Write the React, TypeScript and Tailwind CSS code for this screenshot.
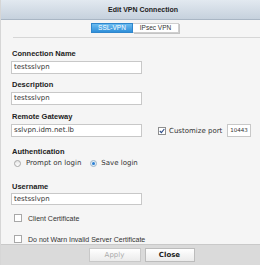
export default function App() {
  const label = "h-[9px] text-[7.5px] leading-[9px] font-bold text-[#222] pl-px";
  const input =
    "bg-white border border-[#c8c8c8] px-[2px] text-[7px] text-[#333] font-['DejaVu_Sans',sans-serif] whitespace-nowrap";
  const small = "text-[7px] leading-[10px] text-[#333] font-['DejaVu_Sans',sans-serif] whitespace-nowrap";
  return (
    <div className="w-[260px] h-[265px] flex flex-col bg-[#f5f5f5] border-l border-[#d6d6d6] font-['Liberation_Sans',Arial,sans-serif] overflow-hidden">
      {/* Header */}
      <div className="h-[20px] shrink-0 flex items-center justify-center pl-[25px] bg-gradient-to-b from-[#e2e9f0] to-[#c6d1dd] border-b border-[#a9b6c4]">
        <span className="text-[7px] leading-none font-bold text-[#222] whitespace-nowrap">Edit VPN Connection</span>
      </div>

      {/* Tabs */}
      <div className="flex mt-[3px] ml-[90px]">
        <div className="h-[10px] w-[42px] flex items-center justify-center bg-gradient-to-b from-[#6bbcf0] to-[#2e8fd9] border border-[#2f86cc] text-[6.5px] leading-none text-white">
          SSL-VPN
        </div>
        <div className="h-[10px] w-[46px] flex items-center justify-center bg-white border border-l-0 border-[#cfcfcf] shadow-[1px_1px_0_#c4c4c4] text-[6.5px] leading-none text-[#333]">
          IPsec VPN
        </div>
      </div>
      <div className="ml-[12px] mt-[4px] h-px shrink-0 bg-[#d6d6d6]" />

      {/* Form */}
      <div className="flex flex-col pl-[10px]">
        <div className={label + " mt-[11px]"}>Connection Name</div>
        <div className={input + " mt-[3px] w-[131px] h-[13px] leading-[11px]"}>testsslvpn</div>

        <div className={label + " mt-[6px]"}>Description</div>
        <div className={input + " mt-[3px] w-[131px] h-[13px] leading-[11px]"}>testsslvpn</div>

        <div className={label + " mt-[7px]"}>Remote Gateway</div>
        <div className="flex items-center mt-[3px] h-[13px]">
          <div className={input + " w-[131px] h-[13px] leading-[11px] text-[6.5px]"}>sslvpn.idm.net.lb</div>
          <div className="ml-[16px] w-[8px] h-[8px] bg-white border border-[#8e8e8e] flex items-center justify-center">
            <svg width="6" height="6" viewBox="0 0 6 6">
              <path d="M0.8 3 L2.4 4.6 L5.3 1" stroke="#2b4a86" strokeWidth="1.1" fill="none" />
            </svg>
          </div>
          <span className={small + " ml-[3px]"}>Customize port</span>
          <div className="ml-[5px] h-[13px] w-[24px] bg-white border border-[#c8c8c8] text-[5.5px] leading-[11px] pl-[2px] text-[#333] font-['DejaVu_Sans',sans-serif]">
            10443
          </div>
        </div>

        <div className={label + " mt-[10px]"}>Authentication</div>
        <div className={"flex items-center mt-[2px] h-[10px] " + small}>
          <span className="ml-[3px] w-[7px] h-[7px] rounded-full border border-[#a8a8a8] bg-gradient-to-b from-[#e4e4e4] to-white" />
          <span className="ml-[5px]">Prompt on login</span>
          <span className="ml-[9px] w-[7px] h-[7px] rounded-full border border-[#9fb6c8] bg-[#e1edf6] flex items-center justify-center">
            <span className="w-[3px] h-[3px] rounded-full bg-[#2a7fd4]" />
          </span>
          <span className="ml-[4px]">Save login</span>
        </div>

        <div className={label + " mt-[14px]"}>Username</div>
        <div className={input + " mt-[2px] w-[131px] h-[12px] leading-[10px]"}>testsslvpn</div>

        <div className="flex items-center mt-[8px] h-[10px] ml-[3px]">
          <span className="w-[8px] h-[8px] bg-white border border-[#a8a8a8]" />
          <span className="ml-[6px] text-[7px] leading-none text-[#333] whitespace-nowrap">Client Certificate</span>
        </div>
        <div className="flex items-center mt-[11px] h-[10px] ml-[3px]">
          <span className="w-[8px] h-[8px] bg-white border border-[#a8a8a8]" />
          <span className="ml-[6px] text-[7px] leading-none text-[#333] whitespace-nowrap">Do not Warn Invalid Server Certificate</span>
        </div>
      </div>

      {/* Footer */}
      <div className="mt-auto h-[21px] shrink-0 flex items-center justify-center gap-[4px] pl-[22px] bg-[#dadada] border-t border-[#c9c9c9]">
        <div className="h-[14px] w-[52px] flex items-center justify-center bg-gradient-to-b from-white to-[#ebebeb] border border-[#c8c8c8] text-[7px] leading-none text-[#a9a9a9] font-['DejaVu_Sans',sans-serif]">
          Apply
        </div>
        <div className="h-[14px] w-[50px] flex items-center justify-center bg-gradient-to-b from-white to-[#ebebeb] border border-[#bcbcbc] text-[7px] leading-none font-bold text-[#222] font-['DejaVu_Sans',sans-serif]">
          Close
        </div>
      </div>
    </div>
  );
}
